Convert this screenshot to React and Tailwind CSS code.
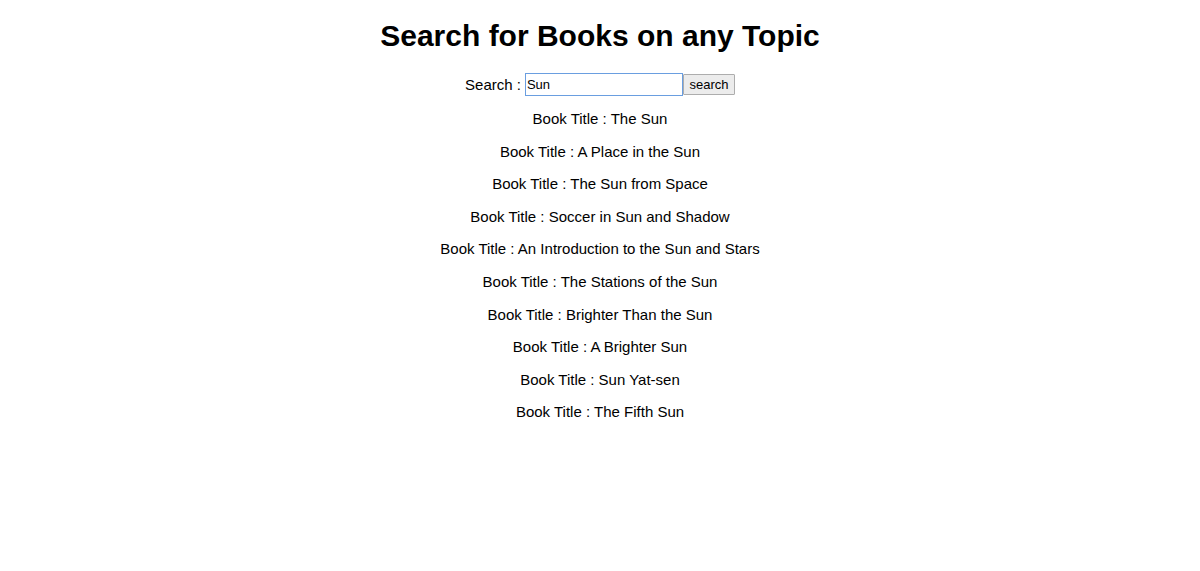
import React from "react";

const titles = [
  "The Sun",
  "A Place in the Sun",
  "The Sun from Space",
  "Soccer in Sun and Shadow",
  "An Introduction to the Sun and Stars",
  "The Stations of the Sun",
  "Brighter Than the Sun",
  "A Brighter Sun",
  "Sun Yat-sen",
  "The Fifth Sun",
];

export default function App() {
  return (
    <div
      className="min-h-[571px] w-full bg-white text-black flex flex-col items-center pt-[19px]"
      style={{ fontFamily: '"Liberation Sans", Arial, sans-serif' }}
    >
      <h1 className="text-[30px] leading-[34px] font-bold">Search for Books on any Topic</h1>
      <div className="mt-[20px] flex items-center text-[15px] leading-[17px]">
        <span className="mr-[4px]">Search :</span>
        <input
          defaultValue="Sun"
          className="w-[158px] h-[23px] border border-[#6a9ee0] outline-none px-[1px] text-[13px] text-black bg-white"
          style={{ fontFamily: '"Liberation Sans", Arial, sans-serif' }}
        />
        <button className="h-[21px] w-[52px] border border-[#adadad] bg-[#ececec] text-[13px] leading-[19px] text-black rounded-[1px]">
          search
        </button>
      </div>
      <div className="mt-[14px] flex flex-col items-center gap-[15.6px] text-[15px] leading-[17px]">
        {titles.map((t) => (
          <p key={t}>Book Title : {t}</p>
        ))}
      </div>
    </div>
  );
}
